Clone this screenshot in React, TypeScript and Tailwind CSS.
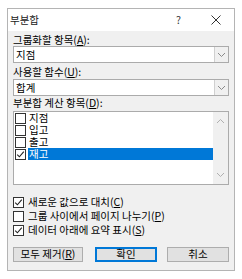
import React from "react";

const font = { fontFamily: '"Noto Sans CJK KR", "Noto Sans", sans-serif' };

function U({ c }: { c: string }) {
  return <span className="underline underline-offset-[1px]">{c}</span>;
}

function Chevron({ up = false, color = "#8a8a8a" }: { up?: boolean; color?: string }) {
  return (
    <svg width="9" height="6" viewBox="0 0 9 6" className={up ? "rotate-180" : ""}>
      <path d="M1 1 L4.5 4.5 L8 1" fill="none" stroke={color} strokeWidth="1" />
    </svg>
  );
}

function Check() {
  return (
    <svg width="9" height="9" viewBox="0 0 9 9" className="absolute left-0 top-0">
      <path d="M1.2 4.6 L3.4 6.8 L7.8 1.6" fill="none" stroke="#222" strokeWidth="1.1" />
    </svg>
  );
}

function Box({ checked }: { checked: boolean }) {
  return (
    <div className="relative w-[11px] h-[11px] border border-[#333] bg-white shrink-0">
      {checked && <Check />}
    </div>
  );
}

function Combo({ value }: { value: string }) {
  return (
    <div className="flex h-[17px] w-[216px] border border-[#ababab] bg-white">
      <div className="flex-1 pl-[2px] leading-[15px]">{value}</div>
      <div className="w-[14px] border-l border-[#d0d0d0] bg-[#f0f0f0] flex items-center justify-center">
        <Chevron />
      </div>
    </div>
  );
}

export default function App() {
  const items = [
    { t: "지점", c: false },
    { t: "입고", c: false },
    { t: "출고", c: false },
    { t: "재고", c: true, sel: true },
  ];
  return (
    <div className="w-[242px] h-[279px] bg-white pt-[8px] pl-[7px] text-[10.5px] text-black" style={font}>
      <div className="w-[228px] h-[263px] border border-[#b4b4b4] flex flex-col">
        <div className="h-[22px] bg-white flex items-center relative">
          <span className="pl-[2px] text-[10.5px] text-[#222]">부분합</span>
          <span className="absolute left-[168px] top-[3px] text-[10.5px] text-[#333]">?</span>
          <svg className="absolute left-[203px] top-[6px]" width="10" height="10" viewBox="0 0 10 10">
            <path d="M0.5 0.5 L9.5 9.5 M9.5 0.5 L0.5 9.5" stroke="#333" strokeWidth="1" />
          </svg>
        </div>
        <div className="flex-1 bg-[#f0f0f0] px-[5px] pt-[2px]">
          <div className="h-[13px] leading-[13px]">
            그룹화할 항목(<U c="A" />):
          </div>
          <Combo value="지점" />
          <div className="mt-[2px] h-[14px] leading-[14px]">
            사용할 함수(<U c="U" />):
          </div>
          <Combo value="합계" />
          <div className="h-[14px] leading-[14px]">
            부분합 계산 항목(<U c="D" />):
          </div>
          <div className="mt-[1px] h-[74px] w-[216px] border border-[#ababab] bg-white flex">
            <div className="flex-1 pt-0">
              {items.map((it) => (
                <div key={it.t} className="flex items-center h-[12px]">
                  <div className="pl-[1px] pr-[2px] h-[12px] flex items-center">
                    <Box checked={it.c} />
                  </div>
                  <div
                    className={
                      "flex-1 h-[12px] leading-[12px] pl-[1px] " +
                      (it.sel ? "bg-[#0078d7] text-white" : "")
                    }
                  >
                    {it.t}
                  </div>
                </div>
              ))}
            </div>
            <div className="w-[15px] bg-[#f0f0f0] flex flex-col justify-between items-center py-[6px]">
              <Chevron up color="#b0b0b0" />
              <Chevron color="#b0b0b0" />
            </div>
          </div>
          <div className="mt-[10px] flex flex-col">
            <div className="flex items-center h-[14px] gap-[4px]">
              <Box checked />
              <span>
                새로운 값으로 대치(<U c="C" />)
              </span>
            </div>
            <div className="flex items-center h-[14px] gap-[4px]">
              <Box checked={false} />
              <span>
                그룹 사이에서 페이지 나누기(<U c="P" />)
              </span>
            </div>
            <div className="flex items-center h-[14px] gap-[4px]">
              <Box checked />
              <span>
                데이터 아래에 요약 표시(<U c="S" />)
              </span>
            </div>
          </div>
          <div className="mt-[10px] flex items-center">
            <div className="w-[70px] h-[15px] border border-[#adadad] bg-[#e1e1e1] flex items-center justify-center leading-none">
              <span>
                모두 제거(<U c="R" />)
              </span>
            </div>
            <div className="ml-[12px] w-[62px] h-[15px] border-2 border-[#0078d7] bg-[#e1e1e1] flex items-center justify-center leading-none">
              확인
            </div>
            <div className="ml-[10px] w-[62px] h-[15px] border border-[#adadad] bg-[#e1e1e1] flex items-center justify-center leading-none">
              취소
            </div>
          </div>
        </div>
      </div>
    </div>
  );
}
